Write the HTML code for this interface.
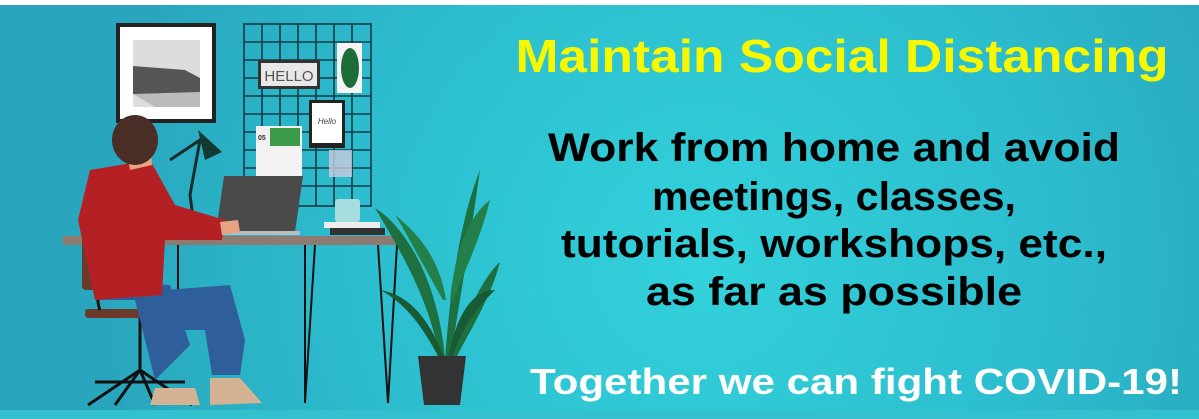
<!DOCTYPE html>
<html><head><meta charset="utf-8"><style>
html,body{margin:0;padding:0;width:1199px;height:419px;overflow:hidden;background:#fff}
svg{display:block}
text{font-family:"Liberation Sans",sans-serif;font-weight:bold}
</style></head><body>
<svg width="1199" height="419" viewBox="0 0 1199 419">
<defs>
<radialGradient id="bg" cx="700" cy="260" r="600" gradientUnits="userSpaceOnUse">
<stop offset="0" stop-color="#32d2dc"/><stop offset="0.6" stop-color="#2cbccd"/><stop offset="1" stop-color="#29a6bd"/>
</radialGradient>
</defs>
<rect x="0" y="5" width="1199" height="414" fill="url(#bg)"/>
<rect x="0" y="410" width="1199" height="9" fill="#33c0cf"/>
<!-- frame -->
<rect x="116" y="23" width="100" height="100" fill="#222"/>
<rect x="120" y="27" width="92" height="92" fill="#fff"/>
<rect x="133" y="40" width="67" height="67" fill="#ddd"/>
<path d="M133 66 L185 70 L200 78 L200 92 L160 96 L133 94Z" fill="#555"/>
<path d="M133 94 L155 107 L200 107 L200 92 Z" fill="#bbb"/>
<!-- grid -->
<g stroke="#173a45" stroke-width="1.6" fill="none">
<rect x="244" y="24" width="127" height="182"/>
<path d="M262 24V206M280 24V206M298 24V206M316 24V206M334 24V206M352 24V206M244 42H371M244 60H371M244 78H371M244 96H371M244 114H371M244 132H371M244 150H371M244 168H371M244 186H371"/>
</g>
<rect x="258" y="60" width="62" height="29" fill="#333"/><rect x="261" y="63" width="56" height="23" fill="#e8e8e8"/>
<text x="289" y="81" font-size="15" text-anchor="middle" fill="#555" style="font-weight:normal">HELLO</text>
<rect x="337" y="43" width="25" height="50" fill="#f4f4f4"/><ellipse cx="350" cy="68" rx="9" ry="20" fill="#1e6b3a"/>
<rect x="309" y="100" width="36" height="48" fill="#222"/><rect x="312" y="103" width="30" height="40" fill="#fff"/>
<text x="327" y="124" font-size="8" text-anchor="middle" fill="#444" style="font-weight:normal;font-style:italic">Hello</text>
<rect x="256" y="126" width="46" height="52" fill="#f2f2f2"/><rect x="270" y="128" width="30" height="18" fill="#3a9a4a"/>
<text x="258" y="140" font-size="7" fill="#333">05</text>
<rect x="329" y="150" width="23" height="27" fill="#ccd" opacity=".8"/>
<rect x="335" y="199" width="25" height="23" rx="3" fill="#a8dde0"/>
<rect x="324" y="222" width="56" height="6" fill="#eee"/><rect x="330" y="228" width="55" height="7" fill="#333"/>
<!-- lamp -->
<path d="M170 160 L200 140 L190 195 L195 232" stroke="#1b2b2b" stroke-width="3" fill="none"/>
<path d="M198 130 L222 152 L205 160Z" fill="#123a32"/>
<!-- laptop -->
<path d="M224 176 L303 176 L295 232 L216 232Z" fill="#4a4a4a"/>
<rect x="210" y="231" width="90" height="4" fill="#bbb"/>
<!-- desk -->
<rect x="63" y="236" width="337" height="9" fill="#8d7a70"/>
<g stroke="#111" stroke-width="2" fill="none">
<path d="M305 245 L305 403 L315 245"/><path d="M378 245 L388 403 L397 245"/><path d="M178 245 L178 300"/>
</g>
<!-- plant -->
<g fill="#1e7040">
<path d="M440 360 C430 300 400 250 375 208 C410 230 440 290 445 360Z"/>
<path d="M445 360 C450 290 460 220 480 170 C470 240 460 300 450 360Z"/>
<path d="M450 360 C470 300 490 270 500 262 C490 300 470 330 455 360Z"/>
<path d="M440 360 C420 320 400 300 380 290 C410 295 430 320 445 360Z" fill="#175a34"/>
<path d="M448 360 C455 320 470 290 495 290 C475 310 460 330 452 360Z" fill="#175a34"/>
<path d="M443 300 C420 260 405 230 395 215 C420 235 440 260 446 300Z" fill="#24804a"/>
<path d="M450 300 C455 250 470 215 490 200 C480 240 465 270 453 300Z" fill="#24804a"/>
</g>
<path d="M418 356 L466 356 L460 405 L424 405Z" fill="#333"/>
<!-- chair -->
<rect x="82" y="235" width="63" height="55" rx="4" fill="#6b3a2a"/>
<rect x="85" y="309" width="112" height="9" rx="3" fill="#6b3a2a"/>
<g stroke="#111" stroke-width="3" fill="none">
<path d="M108 230 C95 235 95 300 100 310"/><path d="M140 318 L140 370"/>
<path d="M140 370 L88 405 M140 370 L115 405 M140 370 L155 405 M140 370 L192 405 M95 382 L185 382"/>
</g>
<!-- man -->
<path d="M165 290 L230 285 L245 340 L240 375 L212 375 L205 330 L165 330Z" fill="#2f5f9a"/>
<path d="M100 280 L170 285 L190 345 L155 380 L135 300 L100 300Z" fill="#2f5f9a"/>
<path d="M90 170 L150 160 L175 205 L225 220 L222 240 L165 240 L162 295 L95 300 L78 220Z" fill="#b52025"/>
<path d="M220 222 L238 220 L240 232 L222 235Z" fill="#e8a382"/>
<path d="M124 140 L150 140 L152 165 L130 170Z" fill="#e8a382"/>
<ellipse cx="135" cy="140" rx="23" ry="25" fill="#4a2e25"/>
<path d="M155 388 L195 388 L200 405 L150 405Z" fill="#d4b394"/>
<path d="M210 378 L240 378 L262 403 L210 405Z" fill="#d4b394"/>
<!-- text -->
<text x="842" y="72" font-size="46" text-anchor="middle" fill="#f7f700" textLength="653" lengthAdjust="spacingAndGlyphs">Maintain Social Distancing</text>
<g font-size="40" fill="#000" text-anchor="middle">
<text x="834" y="161" textLength="572" lengthAdjust="spacingAndGlyphs">Work from home and avoid</text>
<text x="834" y="210" textLength="364" lengthAdjust="spacingAndGlyphs">meetings, classes,</text>
<text x="834" y="257" textLength="546" lengthAdjust="spacingAndGlyphs">tutorials, workshops, etc.,</text>
<text x="834" y="305" textLength="376" lengthAdjust="spacingAndGlyphs">as far as possible</text>
</g>
<text x="856" y="394" font-size="36" text-anchor="middle" fill="#fff" textLength="652" lengthAdjust="spacingAndGlyphs">Together we can fight COVID-19!</text>
</svg>
</body></html>
